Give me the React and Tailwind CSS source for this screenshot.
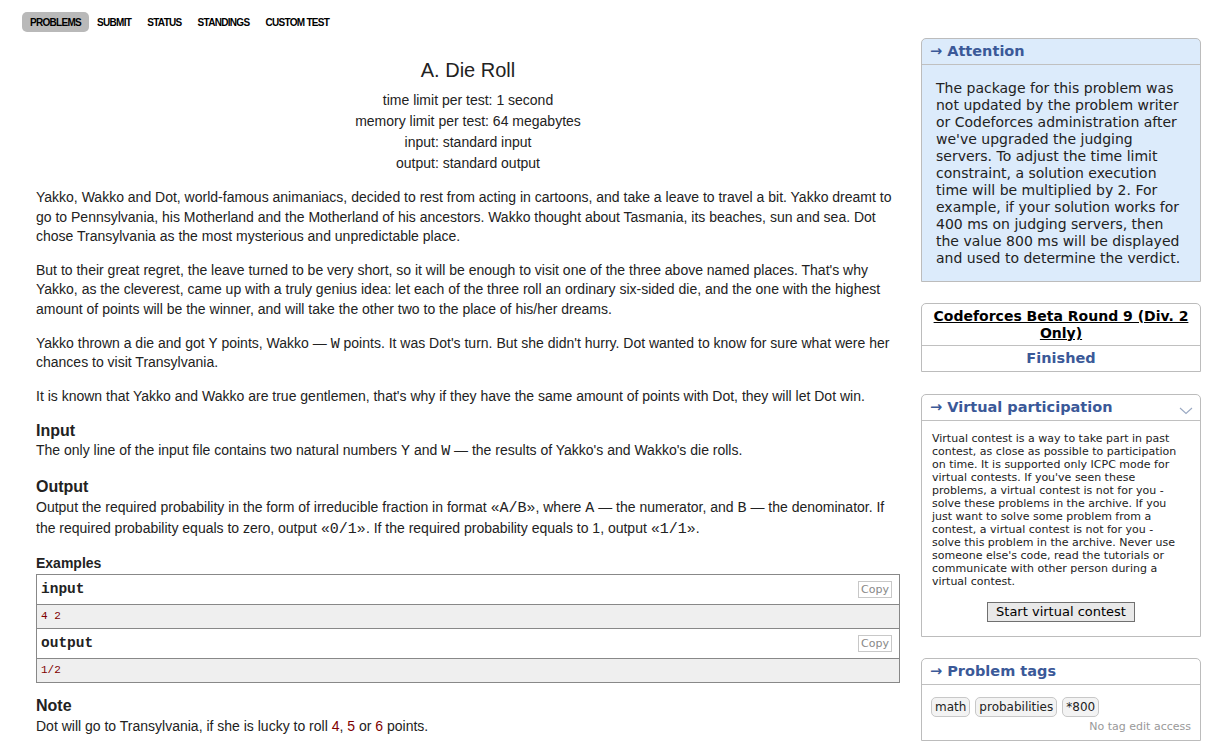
import React from "react";

const sans = "font-['Liberation_Sans',Arial,sans-serif]";
const side = "font-['DejaVu_Sans',Verdana,sans-serif]";
const mono = "font-['Liberation_Mono',monospace]";

function V({ children }) {
  return <span className={`${mono} text-[15px] leading-none`}>{children}</span>;
}

function Menu() {
  const items = ["PROBLEMS", "SUBMIT", "STATUS", "STANDINGS", "CUSTOM TEST"];
  return (
    <div className="flex pt-[12px]">
      {items.map((it, i) => (
        <div
          key={it}
          className={`px-[8px] h-[20px] flex items-center rounded-[5px] ${sans} font-bold text-[10px] tracking-[-0.7px] text-black ${
            i === 0 ? "bg-[#b9b9b9]" : ""
          }`}
        >
          {it}
        </div>
      ))}
    </div>
  );
}

function Sample({ label, data }) {
  return (
    <>
      <div className="h-[30px] flex items-center justify-between pl-[4px] pr-[7px] bg-white border-b border-[#888]">
        <span className={`${mono} font-bold text-[14.5px] text-[#222]`}>{label}</span>
        <span className={`${side} text-[11px] text-[#888] border border-[#c8c8c8] px-[2px] h-[17px] leading-[15px]`}>Copy</span>
      </div>
      <div className={`h-[23px] flex items-center pl-[4px] bg-[#efefef] ${mono} text-[11px] text-[#800000]`}>{data}</div>
    </>
  );
}

function BoxHeader({ children, chevron }) {
  return (
    <div className={`h-[26px] flex items-center justify-between px-[8px] border-b border-[#c0c0c0] ${side} font-bold text-[14.5px] text-[#3b5998]`}>
      <span>→ {children}</span>
      {chevron && (
        <svg width="14" height="8" viewBox="0 0 14 8" className="mt-[6px] mr-[-1px]">
          <path d="M1 1 L7 6.5 L13 1" fill="none" stroke="#9aa9c3" strokeWidth="1.1" />
        </svg>
      )}
    </div>
  );
}

export default function App() {
  return (
    <div className={`flex bg-white min-h-[756px] text-[#222] ${sans}`}>
      {/* Left column */}
      <div className="pl-[22px] w-[900px]">
        <Menu />
        <div className="ml-[14px] w-[864px]">
          <div className="text-center mt-[24px]">
            <div className="text-[20px] leading-[28px]">A. Die Roll</div>
            <div className="mt-[6px] text-[14px] leading-[21px]">
              <div>time limit per test: 1 second</div>
              <div>memory limit per test: 64 megabytes</div>
              <div>input: standard input</div>
              <div>output: standard output</div>
            </div>
          </div>

          <div className="mt-[14px] text-[14px] leading-[19.6px]">
            <p className="mb-[14px]">
              Yakko, Wakko and Dot, world-famous animaniacs, decided to rest from acting in cartoons, and take a leave to travel a bit. Yakko dreamt to go to Pennsylvania, his Motherland and the Motherland of his ancestors. Wakko thought about Tasmania, its beaches, sun and sea. Dot chose Transylvania as the most mysterious and unpredictable place.
            </p>
            <p className="mb-[14px]">
              But to their great regret, the leave turned to be very short, so it will be enough to visit one of the three above named places. That's why Yakko, as the cleverest, came up with a truly genius idea: let each of the three roll an ordinary six-sided die, and the one with the highest amount of points will be the winner, and will take the other two to the place of his/her dreams.
            </p>
            <p className="mb-[14px]">
              Yakko thrown a die and got <V>Y</V> points, Wakko — <V>W</V> points. It was Dot's turn. But she didn't hurry. Dot wanted to know for sure what were her chances to visit Transylvania.
            </p>
            <p>
              It is known that Yakko and Wakko are true gentlemen, that's why if they have the same amount of points with Dot, they will let Dot win.
            </p>
          </div>

          <div className="mt-[15px]">
            <div className="font-bold text-[16px] leading-[20px]">Input</div>
            <p className="text-[14px] leading-[19.6px]">
              The only line of the input file contains two natural numbers <V>Y</V> and <V>W</V> — the results of Yakko's and Wakko's die rolls.
            </p>
          </div>

          <div className="mt-[16px]">
            <div className="font-bold text-[16px] leading-[20px]">Output</div>
            <p className="text-[14px] leading-[21px]">
              Output the required probability in the form of irreducible fraction in format <V>«A/B»</V>, where <V>A</V> — the numerator, and <V>B</V> — the denominator. If the required probability equals to zero, output <V>«0/1»</V>. If the required probability equals to 1, output <V>«1/1»</V>.
            </p>
          </div>

          <div className="mt-[14px]">
            <div className="font-bold text-[14px] leading-[20px]">Examples</div>
            <div className="mt-[1px] border border-[#888]">
              <Sample label="input" data="4 2" />
              <div className="border-t border-[#888]" />
              <Sample label="output" data="1/2" />
            </div>
          </div>

          <div className="mt-[13px]">
            <div className="font-bold text-[16px] leading-[20px]">Note</div>
            <p className="text-[14px] leading-[20px]">
              Dot will go to Transylvania, if she is lucky to roll <span className="text-[#800000]">4</span>, <span className="text-[#800000]">5</span> or <span className="text-[#800000]">6</span> points.
            </p>
          </div>
        </div>
      </div>

      {/* Sidebar */}
      <div className={`ml-[21px] w-[280px] pt-[38px] ${side}`}>
        <div className="border border-[#bcbcbc] rounded-t-[5px] bg-[#dcebfb]">
          <BoxHeader>Attention</BoxHeader>
          <div className="px-[14px] pt-[15px] pb-[14px] text-[14px] leading-[17px] text-[#222]">
            The package for this problem was not updated by the problem writer or Codeforces administration after we've upgraded the judging servers. To adjust the time limit constraint, a solution execution time will be multiplied by 2. For example, if your solution works for 400 ms on judging servers, then the value 800 ms will be displayed and used to determine the verdict.
          </div>
        </div>

        <div className="mt-[21px] border border-[#bcbcbc] rounded-t-[5px]">
          <div className="px-[6px] pt-[4px] pb-[3px] text-center font-bold text-[14px] leading-[17px] underline text-black">
            Codeforces Beta Round 9 (Div. 2 Only)
          </div>
          <div className="border-t border-[#c0c0c0] h-[26px] flex items-center justify-center font-bold text-[14.5px] text-[#3b5998]">
            Finished
          </div>
        </div>

        <div className="mt-[22px] border border-[#bcbcbc] rounded-t-[5px]">
          <BoxHeader chevron>Virtual participation</BoxHeader>
          <div className="pl-[10px] pr-[17px] pt-[11px] pb-[14px]">
            <div className="text-[11px] leading-[13px] text-[#222]">
              Virtual contest is a way to take part in past contest, as close as possible to participation on time. It is supported only ICPC mode for virtual contests. If you've seen these problems, a virtual contest is not for you - solve these problems in the archive. If you just want to solve some problem from a contest, a virtual contest is not for you - solve this problem in the archive. Never use someone else's code, read the tutorials or communicate with other person during a virtual contest.
            </div>
            <div className="flex justify-center mt-[14px] pl-[7px]">
              <button className="h-[20px] px-[8px] border border-[#707070] bg-[#e9e9e9] text-[13px] text-black leading-[18px]">
                Start virtual contest
              </button>
            </div>
          </div>
        </div>

        <div className="mt-[21px] border border-[#bcbcbc] rounded-t-[5px]">
          <BoxHeader>Problem tags</BoxHeader>
          <div className="px-[9px] pt-[12px] pb-[6px]">
            <div className="flex gap-[5px]">
              {["math", "probabilities", "*800"].map((t) => (
                <span key={t} className="h-[20px] flex items-center px-[3px] border border-[#c8c8c8] rounded-[5px] bg-[#f3f3f3] text-[12px] text-[#222]">
                  {t}
                </span>
              ))}
            </div>
            <div className="text-right text-[11px] text-[#999] mt-[3px] leading-[14px]">No tag edit access</div>
          </div>
        </div>
      </div>
    </div>
  );
}
